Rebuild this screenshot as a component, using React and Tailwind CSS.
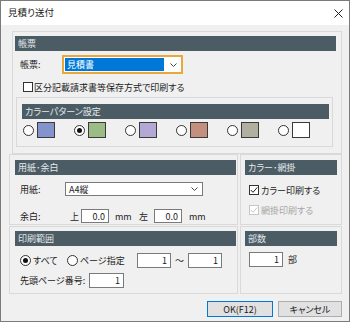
import React from 'react';

const FONT = "font-['Noto_Sans_CJK_JP','Noto_Sans',sans-serif] [font-feature-settings:'palt']";

function Header({ children }) {
  return (
    <div className="h-[15px] bg-[#4b5c65] text-[#e4e8ea] flex items-center pl-[3px] shrink-0">
      {children}
    </div>
  );
}

function Radio({ checked }) {
  return (
    <span className="w-[11px] h-[11px] rounded-full border border-[#333333] bg-white flex items-center justify-center shrink-0">
      {checked && <span className="w-[5px] h-[5px] rounded-full bg-[#111111]" />}
    </span>
  );
}

function Check({ checked, disabled }) {
  return (
    <span
      className={`w-[10px] h-[10px] border bg-white flex items-center justify-center shrink-0 ${
        disabled ? 'border-[#c6c6c6]' : 'border-[#333333]'
      }`}
    >
      {checked && (
        <svg width="8" height="8" viewBox="0 0 8 8" fill="none" stroke={disabled ? '#c6c6c6' : '#222222'} strokeWidth="1">
          <path d="M0.8 4 L3 6.3 L7.3 1.4" />
        </svg>
      )}
    </span>
  );
}

function NumBox({ value, className = '' }) {
  return (
    <div className={`bg-white border border-[#7a7a7a] flex items-center justify-end pr-[3px] shrink-0 ${className}`}>
      {value}
    </div>
  );
}

function Chevron() {
  return (
    <svg width="7" height="4" viewBox="0 0 7 4" fill="none" stroke="#444444" strokeWidth="1">
      <path d="M0.5 0.5 L3.5 3.5 L6.5 0.5" />
    </svg>
  );
}

export default function App() {
  // カラーパターンの見本色
  const swatches = ['#8593cc', '#9bbb87', '#b4a9d5', '#c38f7f', '#b1af9f', '#ffffff'];

  return (
    <div className={`w-[350px] h-[322px] border border-[#7b7b7b] bg-[#f0f0f0] flex flex-col text-[9px] leading-none text-[#1b1b1b] ${FONT}`}>
      {/* title bar */}
      <div className="h-[24px] bg-white flex items-center justify-between pl-[7px] pr-[6px] shrink-0">
        <span className="text-[9.5px]">見積り送付</span>
        <svg width="9" height="9" viewBox="0 0 9 9" stroke="#222222" strokeWidth="1">
          <path d="M0.5 0.5 L8.5 8.5 M8.5 0.5 L0.5 8.5" />
        </svg>
      </div>

      <div className="flex-1 flex flex-col pt-[6px] pl-[8px] pr-[7px]">
        {/* 帳票 */}
        <div className="ml-[3px] h-[123px] border border-[#d9d9d9] pt-[4px] pl-[2px] pr-[5px] flex flex-col shrink-0">
          <Header>帳票</Header>
          <div className="mt-[4px] flex items-center pl-[5px]">
            <span className="w-[42px]">帳票:</span>
            <div className="w-[121px] h-[19px] border-2 border-[#e9a93a] bg-white flex items-center pl-[1px] pr-[4px]">
              <span className="flex-1 h-[13px] bg-[#0078d7] text-white flex items-center pl-[2px]">見積書</span>
              <span className="ml-[6px]">
                <Chevron />
              </span>
            </div>
          </div>
          <div className="mt-[8px] flex items-center gap-[1px] pl-[8px]">
            <Check />
            <span>区分記載請求書等保存方式で印刷する</span>
          </div>
          <div className="mt-[5px] ml-[1px] mr-[3px] h-[50px] border border-[#d9d9d9] pt-[6px] pl-[5px] pr-[3px] flex flex-col">
            <Header>カラーパターン設定</Header>
            <div className="mt-[3px] flex items-center gap-[18px] pl-[1px]">
              {swatches.map((c, i) => (
                <div key={c} className="w-[33px] flex items-center gap-[3px]">
                  <Radio checked={i === 1} />
                  <span className="w-[18px] h-[16px] border border-[#3a3a3a]" style={{ backgroundColor: c }} />
                </div>
              ))}
            </div>
          </div>
        </div>

        {/* 用紙・余白 / カラー・網掛 */}
        <div className="flex gap-[2px] shrink-0">
          <div className="w-[229px] h-[71px] border border-[#d9d9d9] pt-[5px] pl-[5px] pr-[1px] flex flex-col">
            <Header>用紙･余白</Header>
            <div className="mt-[7px] flex items-center pl-[5px]">
              <span className="w-[45px]">用紙:</span>
              <div className="w-[138px] h-[14px] bg-white border border-[#7a7a7a] flex items-center justify-between pl-[3px] pr-[4px]">
                <span>A4縦</span>
                <Chevron />
              </div>
            </div>
            <div className="mt-[13px] flex items-center pl-[5px]">
              <span className="w-[50px]">余白:</span>
              <span className="w-[11px]">上</span>
              <NumBox value="0.0" className="w-[28px] h-[14px]" />
              <span className="ml-[6px] w-[24px]">mm</span>
              <span className="w-[15px]">左</span>
              <NumBox value="0.0" className="w-[28px] h-[14px]" />
              <span className="ml-[7px]">mm</span>
            </div>
          </div>
          <div className="flex-1 h-[71px] border border-[#d9d9d9] pt-[5px] pl-[4px] pr-[4px] flex flex-col">
            <Header>カラー･網掛</Header>
            <div className="mt-[10px] flex items-center gap-[2px] pl-[4px]">
              <Check checked />
              <span>カラー印刷する</span>
            </div>
            <div className="mt-[10px] flex items-center gap-[2px] pl-[4px] text-[#a6a6a6]">
              <Check checked disabled />
              <span>網掛印刷する</span>
            </div>
          </div>
        </div>

        {/* 印刷範囲 / 部数 */}
        <div className="mt-[1px] flex gap-[2px] shrink-0">
          <div className="w-[229px] h-[68px] border border-[#d9d9d9] pt-[4px] pl-[5px] pr-[1px] flex flex-col">
            <Header>印刷範囲</Header>
            <div className="mt-[7px] flex items-center pl-[5px]">
              <div className="w-[47px] flex items-center gap-[2px]">
                <Radio checked />
                <span>すべて</span>
              </div>
              <div className="w-[70px] flex items-center gap-[2px]">
                <Radio />
                <span>ページ指定</span>
              </div>
              <NumBox value="1" className="w-[34px] h-[15px]" />
              <span className="w-[17px] text-center">〜</span>
              <NumBox value="1" className="w-[34px] h-[15px]" />
            </div>
            <div className="mt-[5px] flex items-center pl-[5px]">
              <span className="w-[69px]">先頭ページ番号:</span>
              <NumBox value="1" className="w-[35px] h-[15px]" />
            </div>
          </div>
          <div className="flex-1 h-[68px] border border-[#d9d9d9] pt-[4px] pl-[4px] pr-[4px] flex flex-col">
            <Header>部数</Header>
            <div className="mt-[6px] flex items-center pl-[4px]">
              <NumBox value="1" className="w-[34px] h-[15px]" />
              <span className="ml-[5px]">部</span>
            </div>
          </div>
        </div>

        {/* buttons */}
        <div className="mt-[7px] flex justify-end gap-[5px]">
          <button className="w-[66px] h-[16px] border border-[#0078d7] bg-[#e1e1e1] flex items-center justify-center">
            OK(F12)
          </button>
          <button className="w-[64px] h-[16px] border border-[#adadad] bg-[#e1e1e1] flex items-center justify-center">
            キャンセル
          </button>
        </div>
      </div>
    </div>
  );
}
